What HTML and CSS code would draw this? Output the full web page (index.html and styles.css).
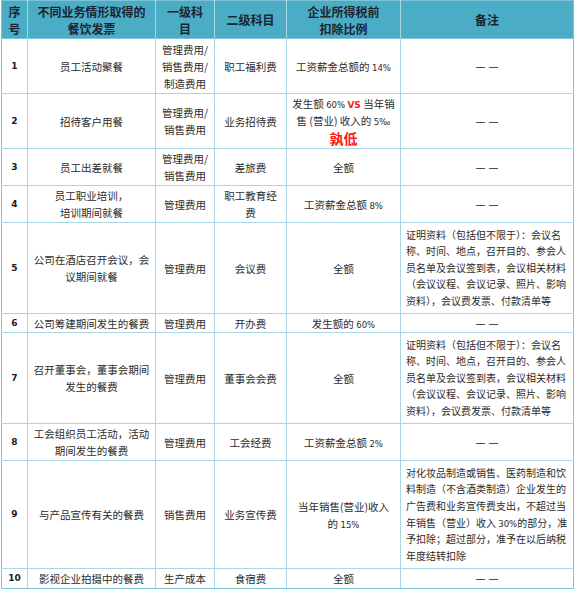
FILE: index.html
```html
<!DOCTYPE html>
<html lang="zh-CN">
<head>
<meta charset="utf-8">
<title>餐饮发票</title>
<link rel="stylesheet" href="styles.css">
</head>
<body>
<table class="grid">
  <colgroup>
    <col class="c-no"><col class="c-case"><col class="c-l1"><col class="c-l2"><col class="c-rate"><col class="c-note">
  </colgroup>
  <thead>
    <tr class="h-head">
      <th>序<br>号</th>
      <th>不同业务情形取得的<br>餐饮发票</th>
      <th>一级科<br>目</th>
      <th>二级科目</th>
      <th>企业所得税前<br>扣除比例</th>
      <th>备注</th>
    </tr>
  </thead>
  <tbody>
    <tr class="h55">
      <td class="no">1</td>
      <td>员工活动聚餐</td>
      <td>管理费用/<br>销售费用/<br>制造费用</td>
      <td>职工福利费</td>
      <td>工资薪金总额的 <span class="num">14%</span></td>
      <td class="dash">——</td>
    </tr>
    <tr class="h55">
      <td class="no">2</td>
      <td>招待客户用餐</td>
      <td>管理费用/<br>销售费用</td>
      <td>业务招待费</td>
      <td>发生额 <span class="num">60%</span> <span class="vs">VS</span> 当年销<br>售 (营业) 收入的 <span class="num">5‰</span><br><span class="low">孰低</span></td>
      <td class="dash">——</td>
    </tr>
    <tr class="h37">
      <td class="no">3</td>
      <td>员工出差就餐</td>
      <td>管理费用/<br>销售费用</td>
      <td>差旅费</td>
      <td>全额</td>
      <td class="dash">——</td>
    </tr>
    <tr class="h37">
      <td class="no">4</td>
      <td>员工职业培训，<br>培训期间就餐</td>
      <td>管理费用</td>
      <td>职工教育经<br>费</td>
      <td>工资薪金总额 <span class="num">8%</span></td>
      <td class="dash">——</td>
    </tr>
    <tr class="h91">
      <td class="no">5</td>
      <td>公司在酒店召开会议，会<br>议期间就餐</td>
      <td>管理费用</td>
      <td>会议费</td>
      <td>全额</td>
      <td class="note">证明资料（包括但不限于）：会议名<br>称、时间、地点，召开目的、参会人<br>员名单及会议签到表，会议相关材料<br>（会议议程、会议记录、照片、影响<br>资料），会议费发票、付款清单等</td>
    </tr>
    <tr class="h19">
      <td class="no">6</td>
      <td>公司筹建期间发生的餐费</td>
      <td>管理费用</td>
      <td>开办费</td>
      <td>发生额的 <span class="num">60%</span></td>
      <td class="dash">——</td>
    </tr>
    <tr class="h91">
      <td class="no">7</td>
      <td>召开董事会，董事会期间<br>发生的餐费</td>
      <td>管理费用</td>
      <td>董事会会费</td>
      <td>全额</td>
      <td class="note">证明资料（包括但不限于）：会议名<br>称、时间、地点，召开目的、参会人<br>员名单及会议签到表，会议相关材料<br>（会议议程、会议记录、照片、影响<br>资料），会议费发票、付款清单等</td>
    </tr>
    <tr class="h37">
      <td class="no">8</td>
      <td>工会组织员工活动，活动<br>期间发生的餐费</td>
      <td>管理费用</td>
      <td>工会经费</td>
      <td>工资薪金总额 <span class="num">2%</span></td>
      <td class="dash">——</td>
    </tr>
    <tr class="h108">
      <td class="no">9</td>
      <td>与产品宣传有关的餐费</td>
      <td>销售费用</td>
      <td>业务宣传费</td>
      <td>当年销售(营业)收入<br>的 <span class="num">15%</span></td>
      <td class="note">对化妆品制造或销售、医药制造和饮<br>料制造（不含酒类制造）企业发生的<br>广告费和业务宣传费支出，不超过当<br>年销售（营业）收入 <span class="num">30%</span>的部分，准<br>予扣除；超过部分，准予在以后纳税<br>年度结转扣除</td>
    </tr>
    <tr class="h20">
      <td class="no">10</td>
      <td>影视企业拍摄中的餐费</td>
      <td>生产成本</td>
      <td>食宿费</td>
      <td>全额</td>
      <td class="dash">——</td>
    </tr>
  </tbody>
</table>
</body>
</html>
```

FILE: styles.css
```css
html, body {
  margin: 0;
  padding: 0;
  background: #ffffff;
}

body {
  font-family: "Noto Sans CJK SC", "Microsoft YaHei", sans-serif;
  color: #2b2b2b;
}

.grid {
  border-collapse: collapse;
  table-layout: fixed;
  width: 572px;
  margin-left: 1px;
  border: 1px solid #7fc3d6;
}

.c-no { width: 26px; }
.c-case { width: 128px; }
.c-l1 { width: 59px; }
.c-l2 { width: 72px; }
.c-rate { width: 114px; }
.c-note { width: 173px; }

.grid th {
  background: #4bacc6;
  color: #1c2430;
  font-weight: bold;
  font-size: 12px;
  line-height: 17px;
  padding: 0 2px;
  text-align: center;
  vertical-align: middle;
  border: 1px solid #a7d6e4;
  border-bottom-color: #7fc3d6;
  border-top-color: #7fc3d6;
  white-space: nowrap;
  overflow: hidden;
}

.grid td {
  font-size: 10.5px;
  line-height: 17px;
  padding: 0 2px;
  text-align: center;
  vertical-align: middle;
  border: 1px solid #a9d7e5;
  white-space: nowrap;
  overflow: hidden;
}

.grid tr > :first-child { border-left-color: #7fc3d6; }
.grid tr > :last-child { border-right-color: #7fc3d6; }
.grid tbody tr:last-child td { border-bottom-color: #7fc3d6; }

.h-head { height: 38px; }
.h55 { height: 55px; }
.h37 { height: 37px; }
.h91 { height: 91px; }
.h19 { height: 19px; }
.h20 { height: 20px; }
.h108 { height: 108px; }

.grid td.no {
  font-family: "DejaVu Sans", sans-serif;
  font-weight: bold;
  font-size: 9px;
  color: #1a1a1a;
}

.num {
  font-family: "DejaVu Sans", sans-serif;
  font-size: 8.5px;
  line-height: 0;
}

.vs {
  font-family: "DejaVu Sans", sans-serif;
  font-weight: bold;
  font-size: 9px;
  line-height: 0;
  color: #ff1a1a;
}

.low {
  display: inline-block;
  vertical-align: top;
  font-size: 14px;
  font-weight: bold;
  color: #ff1a1a;
  line-height: 18px;
}

.grid td.dash {
  font-family: "DejaVu Sans", sans-serif;
  font-size: 10px;
  letter-spacing: 3px;
  padding-left: 5px;
  color: #222222;
}

.grid td.note {
  text-align: left;
  font-size: 10px;
  line-height: 16.6px;
  padding: 0 4px 0 5px;
}
```
